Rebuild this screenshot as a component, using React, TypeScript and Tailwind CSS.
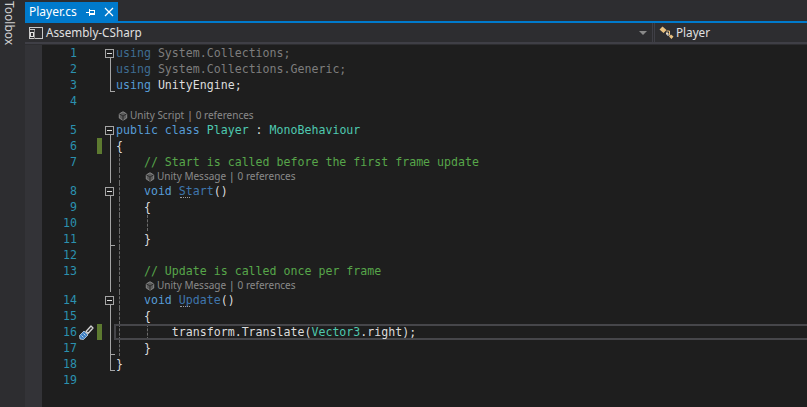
type Span = { t: string; c: string; dots?: boolean };

const KW = 'text-[#569cd6]';
const KW_DIM = 'text-[#3f6d93]';
const TXT = 'text-[#dcdcdc]';
const DIM = 'text-[#7d7d7d]';
const TYPE = 'text-[#4ec9b0]';
const CMT = 'text-[#57a64a]';
const FN = 'text-[#3f76ad]';

type Fold = 'box' | 'line' | 'end' | 'mid';

type Line = {
  n: number;
  fold?: Fold;
  changed?: boolean;
  lens?: { label: string; indented: boolean };
  guides?: number[];
  spans: Span[];
};

const LINES: Line[] = [
  { n: 1, fold: 'box', spans: [{ t: 'using', c: KW_DIM }, { t: ' System.Collections;', c: DIM }] },
  { n: 2, fold: 'line', spans: [{ t: 'using', c: KW_DIM }, { t: ' System.Collections.Generic;', c: DIM }] },
  { n: 3, fold: 'end', spans: [{ t: 'using', c: KW }, { t: ' UnityEngine;', c: TXT }] },
  { n: 4, lens: { label: 'Unity Script', indented: false }, spans: [] },
  { n: 5, fold: 'box', spans: [{ t: 'public class ', c: KW }, { t: 'Player', c: TYPE }, { t: ' : ', c: TXT }, { t: 'MonoBehaviour', c: TYPE }] },
  { n: 6, fold: 'line', changed: true, spans: [{ t: '{', c: TXT }] },
  { n: 7, fold: 'line', lens: { label: 'Unity Message', indented: true }, guides: [0], spans: [{ t: '    // Start is called before the first frame update', c: CMT }] },
  { n: 8, fold: 'box', guides: [0], spans: [{ t: '    ', c: TXT }, { t: 'void ', c: KW }, { t: 'Start', c: FN, dots: true }, { t: '()', c: TXT }] },
  { n: 9, fold: 'line', guides: [0], spans: [{ t: '    {', c: TXT }] },
  { n: 10, fold: 'line', guides: [0, 1], spans: [] },
  { n: 11, fold: 'mid', guides: [0], spans: [{ t: '    }', c: TXT }] },
  { n: 12, fold: 'line', guides: [0], spans: [] },
  { n: 13, fold: 'line', lens: { label: 'Unity Message', indented: true }, guides: [0], spans: [{ t: '    // Update is called once per frame', c: CMT }] },
  { n: 14, fold: 'box', guides: [0], spans: [{ t: '    ', c: TXT }, { t: 'void ', c: KW }, { t: 'Update', c: FN, dots: true }, { t: '()', c: TXT }] },
  { n: 15, fold: 'line', guides: [0], spans: [{ t: '    {', c: TXT }] },
  { n: 16, fold: 'line', changed: true, guides: [0, 1], spans: [{ t: '        transform.Translate(', c: TXT }, { t: 'Vector3', c: TYPE }, { t: '.right);', c: TXT }] },
  { n: 17, fold: 'mid', guides: [0], spans: [{ t: '    }', c: TXT }] },
  { n: 18, fold: 'end', spans: [{ t: '}', c: TXT }] },
  { n: 19, spans: [] },
];

function FoldMark({ kind }: { kind?: Fold }) {
  if (!kind) return <div className="w-[12px] shrink-0" />;
  return (
    <svg width="12" height="16" className="shrink-0" shapeRendering="crispEdges">
      {kind === 'box' && (
        <>
          <rect x="1.5" y="4.5" width="8" height="8" fill="#1e1e1e" stroke="#a5a5a5" />
          <path d="M3 8.500h5" stroke="#dcdcdc" />
          <path d="M6.500 13v3" stroke="#a5a5a5" />
        </>
      )}
      {kind === 'line' && <path d="M6.500 0v16" stroke="#a5a5a5" />}
      {kind === 'end' && <path d="M6.500 0v14.500h4" stroke="#a5a5a5" fill="none" />}
      {kind === 'mid' && <path d="M6.500 0v16M6.500 14.500h4" stroke="#a5a5a5" fill="none" />}
    </svg>
  );
}

function ScrewdriverIcon() {
  return (
    <svg width="17" height="17" viewBox="0 0 17 17" className="shrink-0">
      <path d="M2 15l-.5-3.500L6 7l4 4-4.500 4.500z" fill="#3f7fc1" stroke="#c4d4e4" strokeWidth="0.800" />
      <path d="M3.500 11.500l2 2M5.500 9.500l2 2" stroke="#dbe7f3" strokeWidth="0.800" />
      <path d="M8 7.500l5-5.500 2 2-5 5.500z" fill="#2a2a2a" stroke="#d4d4d4" strokeWidth="1.300" strokeLinejoin="round" />
    </svg>
  );
}

function CodeLens({ label, indented, guide }: { label: string; indented: boolean; guide: boolean }) {
  return (
    <div className={`relative flex h-[13px] items-center font-['Noto_Sans',sans-serif] text-[10px] leading-[13px] text-[#8a8a8a] ${indented ? 'pl-[29px]' : 'pl-[2px]'}`}>
      {guide && <div className="absolute top-0 bottom-0 left-[3px] border-l border-dashed border-[#6b6b6b]" />}
      <svg width="10" height="10" viewBox="0 0 10 10" className="mr-[2px] shrink-0">
        <path d="M5 .8l3.700 2.100v4.200L5 9.200 1.300 7.100V2.900z" fill="#5c5c5c" stroke="#8a8a8a" />
        <path d="M1.300 2.900L5 5l3.700-2.100M5 5v4.200" fill="none" stroke="#2b2b2b" />
      </svg>
      <span>{label}</span>
      <span className="mx-[3px] text-[#a0a0a0]">|</span>
      <span>0 references</span>
    </div>
  );
}

function CodeRow({ line }: { line: Line }) {
  return (
    <div className="relative h-[16px] min-w-0 flex-1 whitespace-pre leading-[16px]">
      {line.guides?.includes(0) && (
        <div className="absolute top-0 bottom-0 left-[3px] border-l border-dashed border-[#6b6b6b]" />
      )}
      {line.guides?.includes(1) && (
        <div className="absolute top-0 bottom-0 left-[31px] border-l border-dashed border-[#6b6b6b]" />
      )}
      {line.n === 16 && (
        <div className="absolute top-0 bottom-0 left-[-2px] right-[-4px] border-2 border-[#46464a]" />
      )}
      {line.spans.map((s, i) => (
        <span key={i} className={`relative ${s.c}`}>
          {s.t}
          {s.dots && (
            <span className="absolute left-[1px] top-[13px] h-0 w-[10px] border-b border-dotted border-[#9a9a9a]" />
          )}
        </span>
      ))}
    </div>
  );
}

export default function App() {
  return (
    <div className="flex h-[407px] w-[807px] overflow-hidden bg-[#2d2d30] font-['Noto_Sans',sans-serif]">
      {/* Toolbox strip */}
      <div className="w-[25px] shrink-0 pt-[1px]">
        <div className="ml-[-2px] w-[22px] text-[12px] leading-[22px] text-[#d0d0d0] [writing-mode:vertical-lr]">
          Toolbox
        </div>
      </div>

      <div className="flex min-w-0 flex-1 flex-col">
        {/* Tab well */}
        <div className="flex h-[21px] shrink-0 items-end">
          <div className="flex h-[19px] w-[93px] items-center bg-[#007acc] pl-[4px] text-[12px] text-white">
            <span>Player.cs</span>
            <svg width="10" height="10" viewBox="0 0 10 10" className="ml-[9px]" shapeRendering="crispEdges">
              <path d="M0 5.500h3M3.500 2v7M3.500 3.500h5v4h-5M3.500 6.500h5" fill="none" stroke="#fff" />
            </svg>
            <svg width="10" height="10" viewBox="0 0 10 10" className="ml-[8px]">
              <path d="M1 1l8 8M9 1l-8 8" stroke="#fff" strokeWidth="1.200" />
            </svg>
          </div>
        </div>
        <div className="h-[2px] shrink-0 bg-[#007acc]" />

        {/* Navigation bar */}
        <div className="flex h-[21px] shrink-0 border-b-2 border-[#3f3f46] bg-[#2d2d30] text-[11.7px] text-[#e0e0e0]">
          <div className="flex w-[627px] shrink-0 items-center pl-[4px]">
            <svg width="14" height="14" viewBox="0 0 14 14" className="mr-[3px] shrink-0" shapeRendering="crispEdges">
              <path d="M.5 1.500h13v11h-13zM.5 3.500h5" fill="none" stroke="#c8c8c8" />
              <path d="M5.500 3.500v9" stroke="#8a8a8a" />
              <rect x="1.500" y="6.500" width="3" height="4" fill="none" stroke="#e0e0e0" />
            </svg>
            <span>Assembly-CSharp</span>
            <div className="ml-auto mr-[5px] h-0 w-0 border-x-[4px] border-t-[4px] border-x-transparent border-t-[#8a8a8a]" />
          </div>
          <div className="w-[3px] shrink-0 border-x border-[#3f3f46]" />
          <div className="flex flex-1 items-center pl-[4px]">
            <svg width="15" height="14" viewBox="0 0 15 14" className="mr-[2px] shrink-0">
              <path d="M.5 3.500L3.500.5 7.500 4 4.500 7zM10 10.500l2-2 2.500 2-2 2.500z" fill="#e8c080" />
              <path d="M7.500 5h3v4.500M7 7.500h2.500" fill="none" stroke="#e8c080" />
              <path d="M8 6v3h2" fill="none" stroke="#f2f2f2" />
            </svg>
            <span>Player</span>
          </div>
        </div>

        {/* Editor */}
        <div className="flex min-h-0 flex-1 pt-[1px]">
          <div className="w-[17px] shrink-0 bg-[#333337]" />
          <div className="min-w-0 flex-1 bg-[#1e1e1e] font-['DejaVu_Sans_Mono',monospace] text-[11.6px]">
            {LINES.map((line) => (
              <div key={line.n}>
                <div className="flex h-[16px]">
                  <div className="w-[35px] shrink-0 text-right leading-[16px] text-[#2b91af]">{line.n}</div>
                  <div className="flex w-[18px] shrink-0 items-center justify-end">
                    {line.n === 16 && <ScrewdriverIcon />}
                  </div>
                  <div className="w-[2px] shrink-0" />
                  <div className={`h-[16px] w-[5px] shrink-0 ${line.changed ? 'bg-[#5d7a30]' : ''}`} />
                  <div className="w-[2px] shrink-0" />
                  <FoldMark kind={line.fold} />
                  <CodeRow line={line} />
                </div>
                {line.lens && (
                  <div className="flex h-[13px]">
                    <div className="w-[62px] shrink-0" />
                    <div className="relative w-[12px] shrink-0">
                      {line.fold && <div className="absolute top-0 bottom-0 left-[6px] w-px bg-[#a5a5a5]" />}
                    </div>
                    <div className="min-w-0 flex-1">
                      <CodeLens label={line.lens.label} indented={line.lens.indented} guide={!!line.guides} />
                    </div>
                  </div>
                )}
              </div>
            ))}
          </div>
        </div>
      </div>
    </div>
  );
}
